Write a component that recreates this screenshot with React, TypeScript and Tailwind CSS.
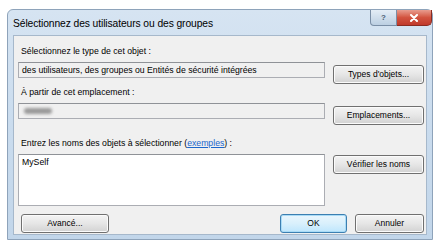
const btn =
  "h-[19px] rounded-[3px] border border-[#707070] bg-gradient-to-b from-[#f4f4f4] via-[#e6e6e6] to-[#d2d2d2] text-[8.5px] text-black flex items-center justify-center shadow-[inset_0_0_0_1px_#fbfbfb]"

export default function App() {
  return (
    <div className="w-[440px] h-[243px] bg-white pt-[9px] pl-[7px] font-['Liberation_Sans',Arial,sans-serif] text-black">
      {/* window frame */}
      <div className="w-[426px] h-[231px] rounded-t-[6px] border border-[#8ea3ba] bg-gradient-to-b from-[#d6e4f2] via-[#cadcee] to-[#c2d6ea] flex flex-col px-[5px] pb-[4px]">
        {/* title bar */}
        <div className="h-[25px] flex items-start justify-between">
          <span className="mt-[6px] text-[10.3px] text-black tracking-[-0.1px]">Sélectionnez des utilisateurs ou des groupes</span>
          <div className="flex -mr-[5px]">
            <div className="w-[27px] h-[16px] rounded-bl-[4px] border border-[#7a8ea6] border-t-0 bg-gradient-to-b from-[#e4edf6] to-[#bccfe2] flex items-center justify-center text-[8px] font-bold text-[#4b5e74]">
              ?
            </div>
            <div className="w-[35px] h-[16px] rounded-br-[5px] border border-[#8a2b20] border-t-0 border-l-0 bg-gradient-to-b from-[#e89c8f] via-[#d2533f] to-[#c0392b] flex items-center justify-center">
              <svg width="10" height="8" viewBox="0 0 10 8">
                <path d="M2 1 L8 7 M8 1 L2 7" stroke="#fff" strokeWidth="2" strokeLinecap="round" />
              </svg>
            </div>
          </div>
        </div>

        {/* client area */}
        <div className="flex-1 bg-[#f0f0f0] border border-[#a6b8cb] pl-[4px] pr-[2px] flex flex-col text-[8.7px]">
          <div className="mt-[9px] h-[12px] leading-[12px] pl-[3px]">Sélectionnez le type de cet objet :</div>
          <div className="mt-[5px] flex items-start gap-[8px]">
            <div className="w-[310px] h-[16px] border border-[#abadb3] border-t-[#8f9297] bg-[#f0f0f0] pl-[3px] leading-[14px]">
              des utilisateurs, des groupes ou Entités de sécurité intégrées
            </div>
            <button className={`${btn} w-[92px] mt-[3px]`}>Types d'objets...</button>
          </div>

          <div className="mt-[2px] h-[12px] leading-[12px] pl-[3px]">À partir de cet emplacement :</div>
          <div className="mt-[5px] flex items-start gap-[8px]">
            <div className="w-[310px] h-[16px] border border-[#abadb3] border-t-[#8f9297] bg-[#f0f0f0] pl-[5px] flex items-center">
              <div className="w-[28px] h-[6px] rounded-full bg-[#9a9a9a] blur-[1.5px]" />
            </div>
            <button className={`${btn} w-[92px] mt-[3px]`}>Emplacements...</button>
          </div>

          <div className="mt-[12px] h-[12px] leading-[12px] pl-[3px]">
            Entrez les noms des objets à sélectionner (
            <span className="text-[#1a66cc] underline">exemples</span>) :
          </div>
          <div className="mt-[5px] flex items-start gap-[8px]">
            <div className="w-[310px] h-[52px] border border-[#abadb3] border-t-[#8f9297] bg-white pl-[3px] pt-[1px] leading-[12px]">
              MySelf
            </div>
            <button className={`${btn} w-[92px] mt-[1px]`}>Vérifier les noms</button>
          </div>

          <div className="mt-[8px] flex items-center">
            <button className={`${btn} ml-[3px] w-[88px]`}>Avancé...</button>
            <button className="ml-auto h-[19px] w-[67px] rounded-[3px] border border-[#3c7fb1] bg-gradient-to-b from-[#eaf6fd] via-[#d9f0fc] to-[#bee6fd] text-[8.5px] flex items-center justify-center shadow-[inset_0_0_0_1px_#a9dbf6]">
              OK
            </button>
            <button className={`${btn} ml-[8px] w-[69px]`}>Annuler</button>
          </div>
        </div>
      </div>
    </div>
  )
}
